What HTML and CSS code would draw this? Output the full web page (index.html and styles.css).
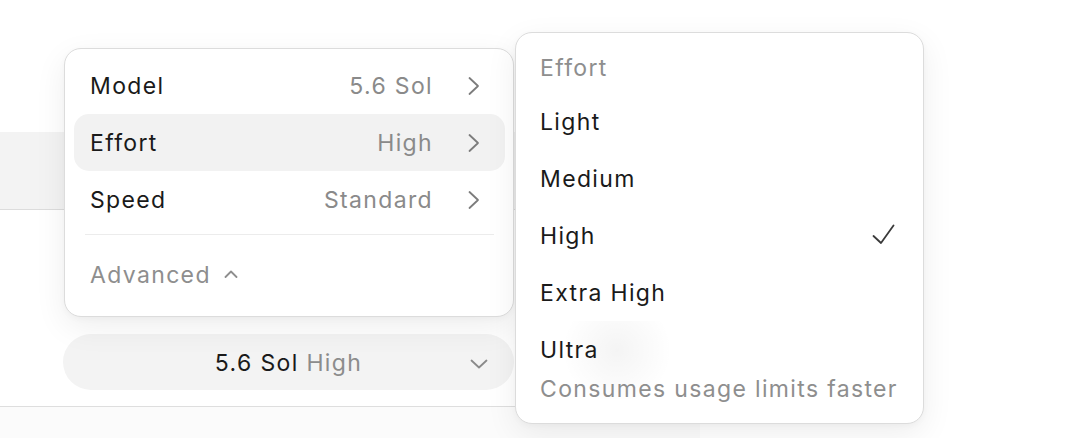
FILE: index.html
```html
<!DOCTYPE html>
<html lang="en">
<head>
<meta charset="utf-8">
<title>Model menu</title>
<link rel="stylesheet" href="styles.css">
</head>
<body>
<div class="page">
  <div class="panel">
    <div class="strip"></div>
    <div class="pill-wrap">
      <button class="pill">
        <span class="pill-spacer"></span>
        <span class="pill-text">5.6 Sol <span class="muted">High</span></span>
        <svg class="pill-chev" width="18" height="10" viewBox="0 0 18 10"><path d="M1.5 1.5 L9 8.5 L16.5 1.5" fill="none" stroke="#8a8a8a" stroke-width="1.8" stroke-linecap="round" stroke-linejoin="round"/></svg>
      </button>
    </div>
  </div>
  <div class="below"></div>

  <div class="menu main-menu">
    <div class="row">
      <span class="label">Model</span>
      <span class="value">5.6 Sol</span>
      <svg class="chev" width="12" height="20" viewBox="0 0 12 20"><path d="M1.5 2 L10 10 L1.5 18" fill="none" stroke="#7c7c7c" stroke-width="1.8" stroke-linecap="round" stroke-linejoin="round"/></svg>
    </div>
    <div class="row active">
      <span class="label">Effort</span>
      <span class="value">High</span>
      <svg class="chev" width="12" height="20" viewBox="0 0 12 20"><path d="M1.5 2 L10 10 L1.5 18" fill="none" stroke="#7c7c7c" stroke-width="1.8" stroke-linecap="round" stroke-linejoin="round"/></svg>
    </div>
    <div class="row">
      <span class="label">Speed</span>
      <span class="value">Standard</span>
      <svg class="chev" width="12" height="20" viewBox="0 0 12 20"><path d="M1.5 2 L10 10 L1.5 18" fill="none" stroke="#7c7c7c" stroke-width="1.8" stroke-linecap="round" stroke-linejoin="round"/></svg>
    </div>
    <div class="divider"></div>
    <div class="advanced">
      <span>Advanced</span>
      <svg class="caret" width="14" height="8" viewBox="0 0 14 8"><path d="M1.5 7 L7 1.5 L12.5 7" fill="none" stroke="#8e8e8e" stroke-width="1.8" stroke-linecap="round" stroke-linejoin="round"/></svg>
    </div>
  </div>

  <div class="menu sub-menu">
    <div class="sub-header">Effort</div>
    <div class="item">Light</div>
    <div class="item">Medium</div>
    <div class="item selected">
      <span>High</span>
      <svg class="check" width="23" height="20" viewBox="0 0 23 20"><path d="M1.5 12 L9 19 L21.5 1.5" fill="none" stroke="#3a3a3a" stroke-width="1.8" stroke-linecap="round" stroke-linejoin="round"/></svg>
    </div>
    <div class="item">Extra High</div>
    <div class="item ultra">
      <span class="ultra-label">Ultra</span>
      <span class="ultra-note">Consumes usage limits faster</span>
    </div>
  </div>
</div>
</body>
</html>
```

FILE: styles.css
```css
* { box-sizing: border-box; }

html, body {
  margin: 0;
  padding: 0;
  background: #ffffff;
}

body {
  font-family: "Inter", "Noto Sans", "Liberation Sans", sans-serif;
  color: #1a1a1a;
  font-size: 23px;
  letter-spacing: 1.35px;
  width: 1070px;
  height: 438px;
  overflow: hidden;
}

.page {
  position: relative;
  width: 1070px;
  height: 438px;
}

.panel {
  width: 700px;
  height: 407px;
  background: #ffffff;
  border-bottom: 1px solid #dedede;
  padding-top: 132px;
}

.strip {
  height: 78px;
  background: #f3f3f3;
  border-bottom: 1px solid #dcdcdc;
}

.pill-wrap {
  padding-left: 63px;
  padding-top: 124px;
}

.pill {
  display: grid;
  grid-template-columns: 1fr auto 1fr;
  align-items: center;
  width: 451px;
  height: 56px;
  border: none;
  border-radius: 28px;
  background: #f3f3f3;
  font: inherit;
  letter-spacing: inherit;
  color: #1a1a1a;
  padding: 0 26px 0 26px;
}

.pill-text {
  line-height: 56px;
  padding-top: 1px;
  white-space: nowrap;
}

.muted { color: #8c8c8c; }

.pill-chev { justify-self: end; margin-top: 2px; }

.below {
  width: 700px;
  height: 31px;
  background: #fbfbfb;
}

.menu {
  position: absolute;
  background: #ffffff;
  border: 1px solid #dcdcdc;
  border-radius: 17px;
  box-shadow: 0 10px 32px rgba(0, 0, 0, 0.07), 0 2px 6px rgba(0, 0, 0, 0.03);
}

.main-menu {
  left: 64px;
  top: 48px;
  width: 450px;
  height: 269px;
  padding: 8px 8px 6px 9px;
}

.row {
  display: flex;
  align-items: center;
  height: 57px;
  padding: 0 25px 0 16px;
  border-radius: 15px;
}

.row.active { background: #f2f2f2; }

.label { flex: 1; }

.value {
  color: #8a8a8a;
  margin-right: 35px;
}

.chev { flex: none; }

.divider {
  height: 1px;
  background: #ececec;
  margin: 6px 11px 5px 11px;
}

.advanced {
  display: flex;
  align-items: center;
  gap: 13px;
  height: 70px;
  padding-left: 16px;
  color: #8e8e8e;
}

.caret { margin-top: -3px; }

.sub-menu {
  left: 515px;
  top: 32px;
  width: 409px;
  height: 392px;
  padding: 9px 9px 9px 9px;
}

.sub-header {
  height: 51px;
  line-height: 53px;
  padding-left: 15px;
  color: #8e8e8e;
}

.item {
  display: flex;
  align-items: center;
  justify-content: space-between;
  height: 57px;
  padding: 0 19px 0 15px;
  border-radius: 15px;
}

.check { margin-top: -3px; }

.item.ultra {
  display: block;
  height: auto;
  background: radial-gradient(circle at 92px 29px, rgba(0, 0, 0, 0.045), rgba(0, 0, 0, 0) 55px);
}

.ultra-label {
  display: block;
  line-height: 57px;
  padding-top: 1px;
}

.ultra-note {
  display: block;
  line-height: 20px;
  color: #8e8e8e;
  white-space: nowrap;
}
```
